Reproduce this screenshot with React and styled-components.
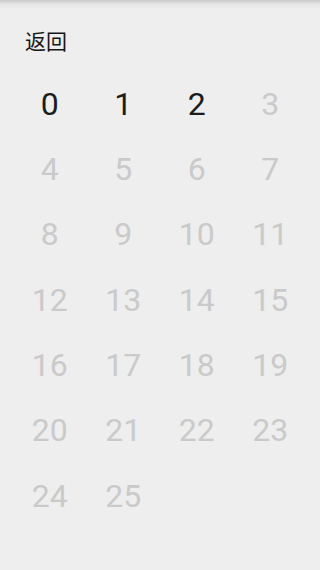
import React from "react";
import styled, { createGlobalStyle } from "styled-components";

const GlobalStyle = createGlobalStyle`
    html, body {
        margin: 0;
        padding: 0;
        height: 100%;
    }
    body {
        background: linear-gradient(#c9c9c9 0px, #e4e4e4 4px, #eeeeee 9px) no-repeat, #eeeeee;
        font-family: Roboto, "Noto Sans", "Noto Sans CJK SC", sans-serif;
    }
`;

const Page = styled.div`
    width: 320px;
    min-height: 570px;
    display: flex;
    flex-direction: column;
`;

const Header = styled.div`
    height: 71px;
    box-sizing: border-box;
    padding: 30px 25px 0;
`;

const BackButton = styled.span`
    font-family: "Noto Sans CJK SC", "Noto Sans", sans-serif;
    font-size: 21px;
    line-height: 21px;
    color: #161616;
    cursor: pointer;
`;

const NumberGrid = styled.div`
    display: grid;
    grid-template-columns: repeat(4, 1fr);
    grid-auto-rows: 65.33px;
    padding: 0 13px;
`;

const Cell = styled.div`
    display: flex;
    align-items: center;
    justify-content: center;
    font-family: Roboto, sans-serif;
    font-size: 32px;
    line-height: 32px;
    color: ${(p) => (p.$active ? "#1c1c1c" : "#cacaca")};
`;

const numbers = Array.from({ length: 26 }, (_, i) => i);
const unlocked = 3;

export default function App() {
    return (
        <>
            <GlobalStyle />
            <Page>
                <Header>
                    <BackButton>返回</BackButton>
                </Header>
                <NumberGrid>
                    {numbers.map((n) => (
                        <Cell key={n} $active={n < unlocked}>
                            {n}
                        </Cell>
                    ))}
                </NumberGrid>
            </Page>
        </>
    );
}
